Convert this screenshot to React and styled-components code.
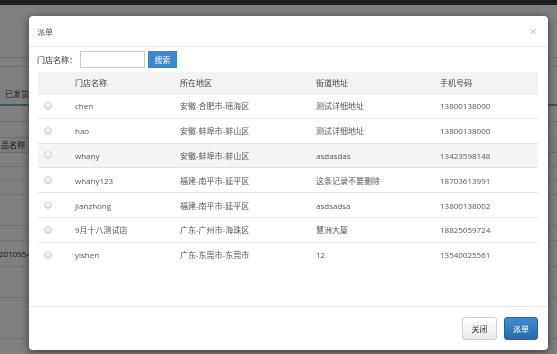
import React from 'react';
import styled, { createGlobalStyle } from 'styled-components';

const stores = [
  { name: 'chen', area: '安徽-合肥市-瑶海区', street: '测试详细地址', phone: '13800138000' },
  { name: 'hao', area: '安徽-蚌埠市-蚌山区', street: '测试详细地址', phone: '13800138000' },
  { name: 'whany', area: '安徽-蚌埠市-蚌山区', street: 'asdasdas', phone: '13423598148', striped: true },
  { name: 'whany123', area: '福建-南平市-延平区', street: '这条记录不要删除', phone: '18703613991' },
  { name: 'jianzhong', area: '福建-南平市-延平区', street: 'asdsadsa', phone: '13800138002' },
  { name: '9月十八测试店', area: '广东-广州市-海珠区', street: '慧洲大厦', phone: '18825059724' },
  { name: 'yishen', area: '广东-东莞市-东莞市', street: '12', phone: '13540025561', last: true },
];

// heights of the rows of the page table behind the dialog
const bgRows = [13, 13, 13, 30, 14, 25, 30, 40];

function App() {
  return (
    <>
      <GlobalStyle />
      <Page>
        <NavBar />
        <Toolbar />
        <SubBar />
        <Tabs>
          <Tab>已发货</Tab>
        </Tabs>
        <BgTable>
          <BgRow style={{ height: 15 }} />
          <BgHeader>品名称</BgHeader>
          {bgRows.map((h, i) => (
            <BgRow key={i} style={{ height: h }}>
              {i === 5 ? '20109542' : ''}
            </BgRow>
          ))}
        </BgTable>
      </Page>

      <Overlay>
        <Modal>
          <Header>
            <Title>派单</Title>
            <Close>×</Close>
          </Header>
          <Body>
            <SearchRow>
              <Label>门店名称：</Label>
              <Input />
              <SearchButton>搜索</SearchButton>
            </SearchRow>
            <Table>
              <HeadRow>
                <Cell />
                <Cell>门店名称</Cell>
                <Cell>所在地区</Cell>
                <Cell>街道地址</Cell>
                <Cell>手机号码</Cell>
              </HeadRow>
              {stores.map(s => (
                <Row key={s.name} $striped={s.striped} $last={s.last}>
                  <RadioCell>
                    <Radio />
                  </RadioCell>
                  <Cell>{s.name}</Cell>
                  <Cell>{s.area}</Cell>
                  <Cell>{s.street}</Cell>
                  <Cell>{s.phone}</Cell>
                </Row>
              ))}
            </Table>
          </Body>
          <Footer>
            <CloseButton>关闭</CloseButton>
            <PrimaryButton>派单</PrimaryButton>
          </Footer>
        </Modal>
      </Overlay>
    </>
  );
}

const GlobalStyle = createGlobalStyle`
  html, body {
    margin: 0;
    padding: 0;
    background: #fff;
    font-family: "Open Sans", "Noto Sans CJK SC", sans-serif;
    overflow: hidden;
  }
`;

const Page = styled.div`
  width: 557px;
  height: 354px;
  display: flex;
  flex-direction: column;
  background: #fff;
`;

const NavBar = styled.div`
  height: 5px;
  flex-shrink: 0;
  background: #3a4047;
`;

const Toolbar = styled.div`
  height: 52px;
  flex-shrink: 0;
  border-bottom: 1px solid #e2e2e2;
`;

const SubBar = styled.div`
  height: 8px;
  flex-shrink: 0;
  border-bottom: 1px solid #e2e2e2;
`;

const Tabs = styled.div`
  display: flex;
  align-items: flex-end;
  flex-shrink: 0;
  height: 39px;
  box-sizing: border-box;
  padding: 0 0 5px 5px;
  border-bottom: 2px solid #7aa3cf;
`;

const Tab = styled.span`
  font-size: 8px;
  line-height: 10px;
  color: #444;
`;

const BgTable = styled.div`
  margin-top: 15px;
  display: flex;
  flex-direction: column;
  border-top: 1px solid #dedede;
`;

const BgHeader = styled.div`
  height: 14px;
  flex-shrink: 0;
  background: #f6f6f6;
  border-bottom: 1px solid #dedede;
  font-size: 8px;
  line-height: 14px;
  color: #333;
  padding-left: 1px;
`;

const BgRow = styled.div`
  flex-shrink: 0;
  border-bottom: 1px solid #e4e4e4;
  font-size: 8px;
  color: #333;
  display: flex;
  align-items: center;
  margin-left: -1px;
`;

const Overlay = styled.div`
  position: fixed;
  inset: 0;
  background: rgba(0, 0, 0, 0.5);
  display: flex;
  align-items: flex-start;
  padding: 16px 0 0 29px;
`;

const Modal = styled.div`
  width: 519px;
  height: 334px;
  background: #fff;
  border-radius: 4px;
  box-shadow: 0 2px 8px rgba(0, 0, 0, 0.55);
  display: flex;
  flex-direction: column;
`;

const Header = styled.div`
  height: 31px;
  display: flex;
  align-items: center;
  justify-content: space-between;
  padding: 1px 11px 0 8px;
  box-sizing: border-box;
  border-bottom: 1px solid #e8e8e8;
`;

const Title = styled.span`
  font-size: 8px;
  color: #555;
`;

const Close = styled.span`
  font-size: 13px;
  color: #c2c2c2;
  line-height: 1;
`;

const Body = styled.div`
  flex: 1;
  padding: 4px 10px 0 8px;
`;

const SearchRow = styled.div`
  display: flex;
  align-items: center;
  height: 17px;
`;

const Label = styled.span`
  font-size: 8px;
  color: #333;
  width: 43px;
`;

const Input = styled.div`
  width: 63px;
  height: 15px;
  border: 1px solid #c9c9c9;
  background: #fff;
`;

const SearchButton = styled.div`
  margin-left: 3px;
  width: 29px;
  height: 17px;
  background: #3a87c9;
  color: #fff;
  font-size: 8px;
  display: flex;
  align-items: center;
  justify-content: center;
`;

const Table = styled.div`
  margin: 4px 0 0 1px;
  display: flex;
  flex-direction: column;
`;

const columns = '29px 105px 136px 124px 1fr';

const HeadRow = styled.div`
  display: grid;
  grid-template-columns: ${columns};
  align-items: center;
  height: 21px;
  background: #f2f2f2;
  border-bottom: 1px solid #e6e6e6;
  color: #444;
`;

const Row = styled.div`
  display: grid;
  grid-template-columns: ${columns};
  align-items: center;
  height: 23.8px;
  background: ${p => (p.$striped ? '#f5f5f5' : '#fff')};
  border-bottom: 1px solid ${p => (p.$last ? 'transparent' : '#e6e6e6')};
  color: #555;
`;

const Cell = styled.div`
  padding-left: 8px;
  font-size: 8px;
  white-space: nowrap;
`;

const RadioCell = styled.div`
  display: flex;
  padding-left: 6px;
`;

const Radio = styled.span`
  width: 8px;
  height: 8px;
  border-radius: 50%;
  border: 1px solid #cfcfcf;
  background: linear-gradient(#fbfbfb, #e3e3e3);
  box-sizing: border-box;
`;

const Footer = styled.div`
  height: 43px;
  border-top: 1px solid #e8e8e8;
  display: flex;
  justify-content: flex-end;
  align-items: center;
  gap: 7px;
  padding: 0 10px 0 0;
`;

const BaseButton = styled.div`
  height: 23px;
  box-sizing: border-box;
  border-radius: 3px;
  font-size: 8px;
  display: flex;
  align-items: center;
  justify-content: center;
`;

const CloseButton = styled(BaseButton)`
  width: 35px;
  border: 1px solid #cdcdcd;
  background: linear-gradient(#ffffff, #e9e9e9);
  color: #333;
`;

const PrimaryButton = styled(BaseButton)`
  width: 34px;
  border: 1px solid #2a5f96;
  background: linear-gradient(#3f8bd0, #2b6aab);
  color: #fff;
`;

export default App;
